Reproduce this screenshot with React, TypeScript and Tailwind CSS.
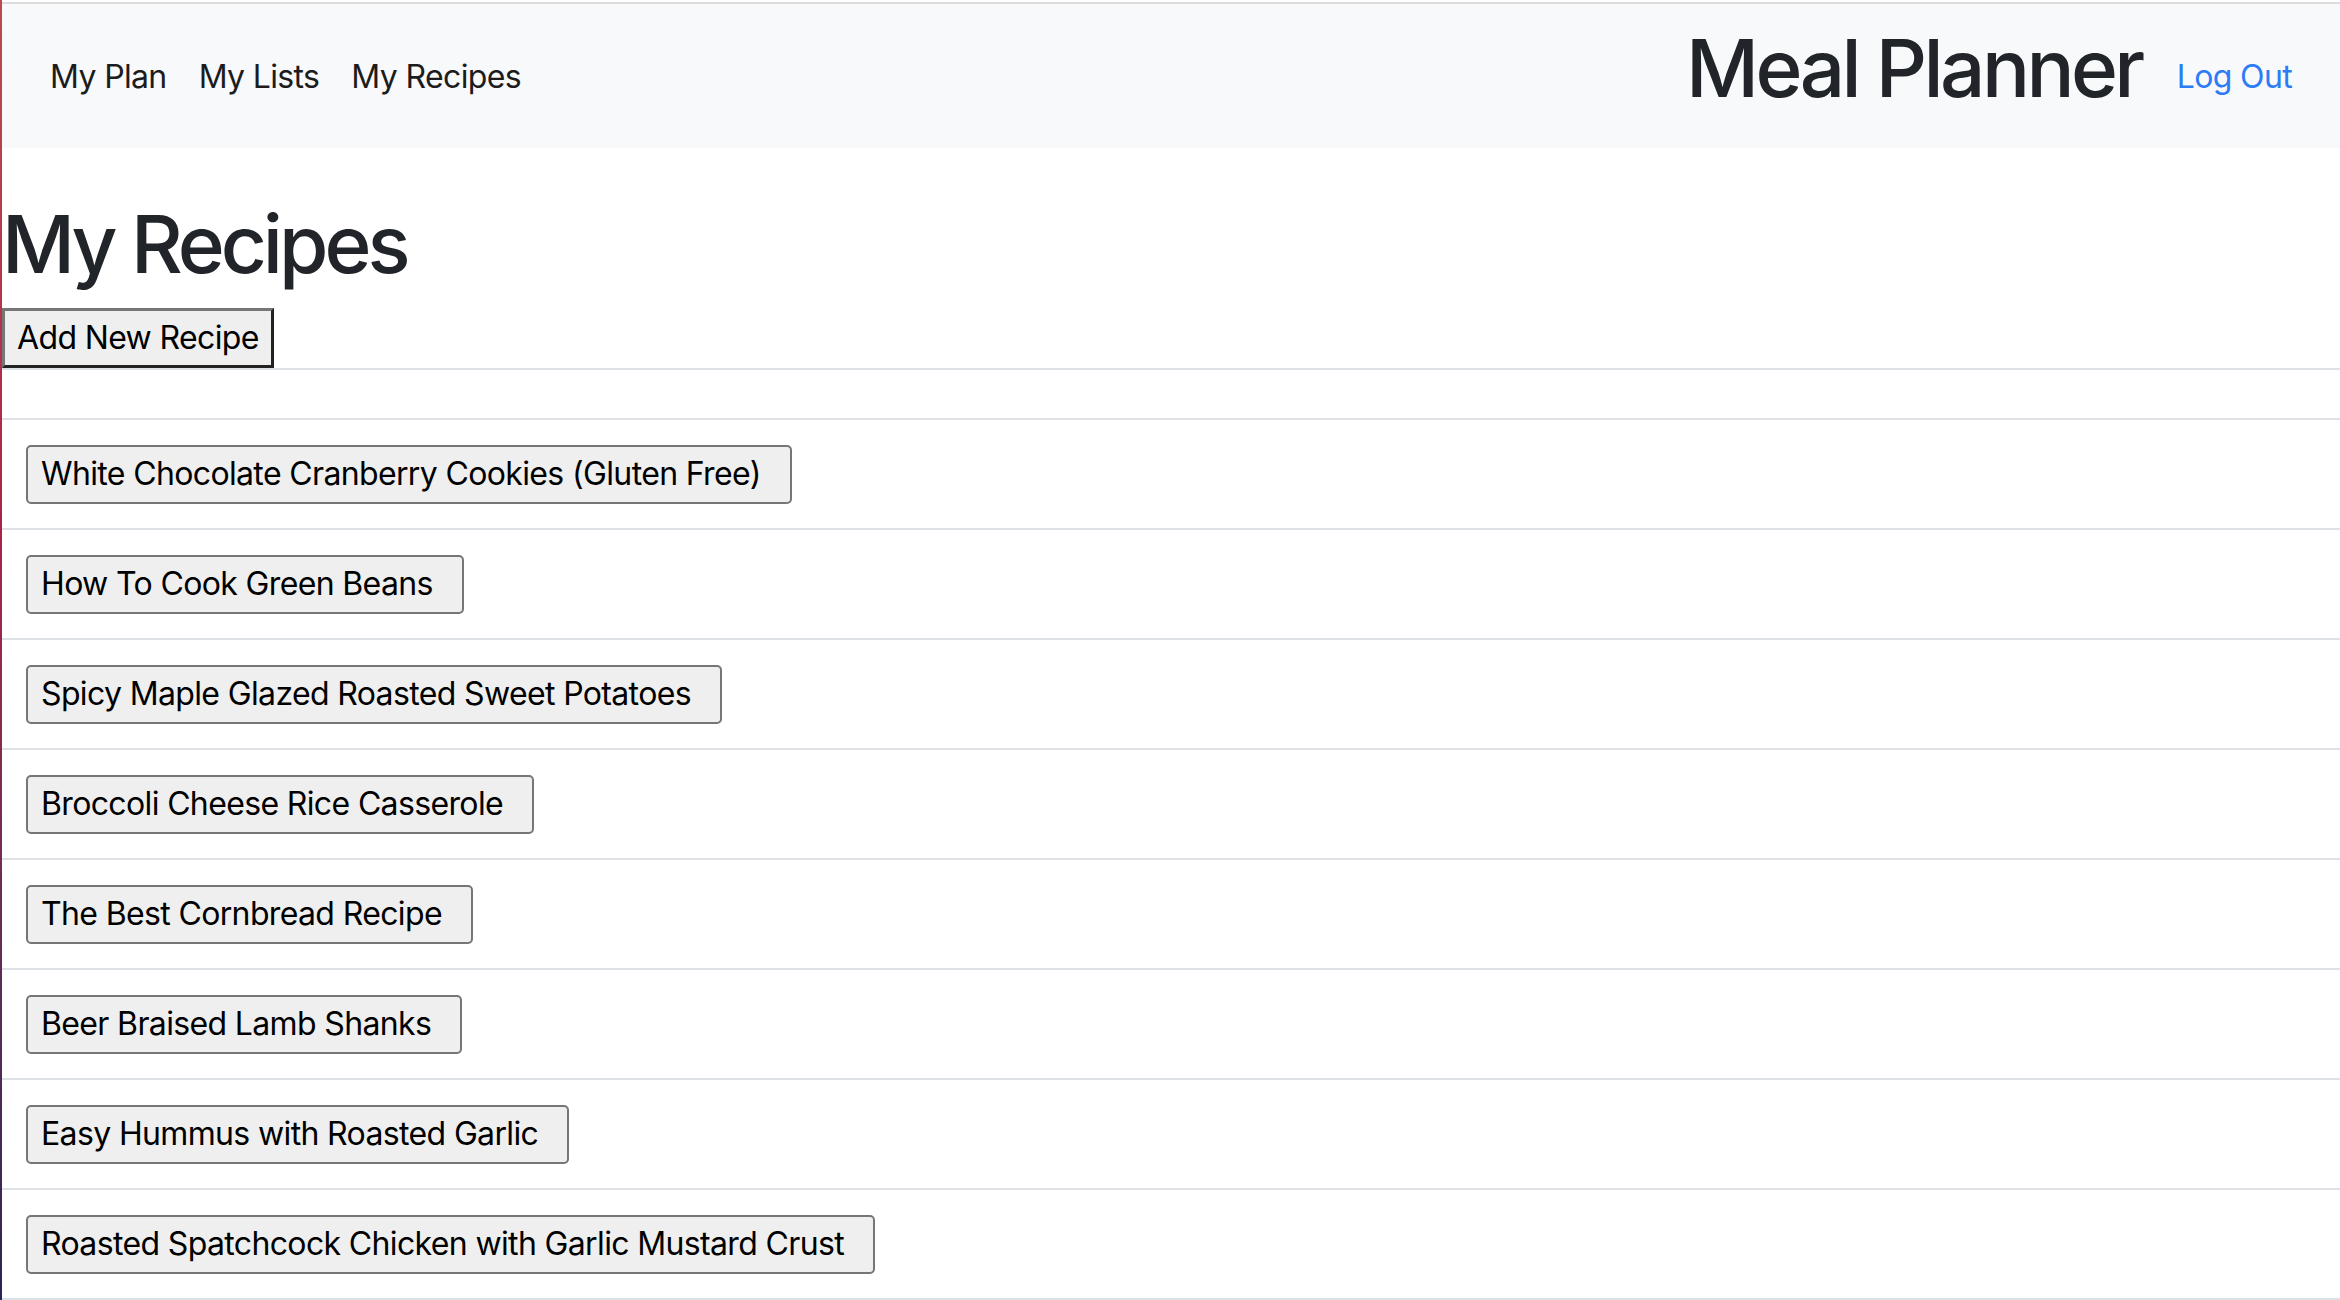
const recipes = [
  "White Chocolate Cranberry Cookies (Gluten Free)",
  "How To Cook Green Beans",
  "Spicy Maple Glazed Roasted Sweet Potatoes",
  "Broccoli Cheese Rice Casserole",
  "The Best Cornbread Recipe",
  "Beer Braised Lamb Shanks",
  "Easy Hummus with Roasted Garlic",
  "Roasted Spatchcock Chicken with Garlic Mustard Crust",
];

const navLinks = ["My Plan", "My Lists", "My Recipes"];

export default function App() {
  return (
    <div className="min-h-screen flex bg-white text-[#212529] font-['Inter','Noto_Sans',sans-serif]">
      {/* left accent strip */}
      <div className="w-[2px] shrink-0 bg-linear-to-b from-[#bb4b4f] via-[#ab2349] via-40% to-[#2b2356]" />

      <div className="flex-1 min-w-0 pt-[2px]">
        {/* Navbar */}
        <nav className="border-t-2 border-[#dcdcdc] bg-[#f8f9fa] px-[32px] py-[16px] flex items-center justify-between">
          <ul className="flex items-center pt-[2px]">
            {navLinks.map((link) => (
              <li key={link}>
                <a href="#" className="block px-[16px] py-[8px] text-[32px] leading-[48px] tracking-[-0.02em] text-[#1c1c1c]">
                  {link}
                </a>
              </li>
            ))}
          </ul>
          <div className="flex items-center">
            <h1 className="mb-[16px] text-[80px] leading-[96px] font-medium tracking-[-0.045em] text-[#212529]">
              Meal Planner
            </h1>
            <a href="#" className="ml-[19px] px-[16px] pt-[10px] pb-[8px] text-[32px] leading-[48px] tracking-[-0.02em] text-[#2d7cf6]">
              Log Out
            </a>
          </div>
        </nav>

        {/* Page */}
        <main>
          <h1 className="mt-[48px] mb-[16px] text-[80px] leading-[96px] font-medium tracking-[-0.05em] text-[#212529]">
            My Recipes
          </h1>
          <button className="h-[60px] px-[12px] bg-[#efefef] text-black text-[32px] leading-[48px] tracking-[-0.02em] border-[3px] border-t-[#767676] border-l-[#767676] border-b-[#222222] border-r-[#222222]">
            Add New Recipe
          </button>

          <div className="h-[52px] border-y-2 border-[#dee2e6]" />
          {recipes.map((r) => (
            <div key={r} className="h-[110px] border-b-2 border-[#dee2e6] pl-[24px] flex items-center">
              <button className="h-[59px] pl-[13px] pr-[29px] bg-[#efefef] text-black text-[32px] leading-[48px] tracking-[-0.02em] border-2 border-[#767676] rounded-[5px]">
                {r}
              </button>
            </div>
          ))}
        </main>
      </div>
    </div>
  );
}
